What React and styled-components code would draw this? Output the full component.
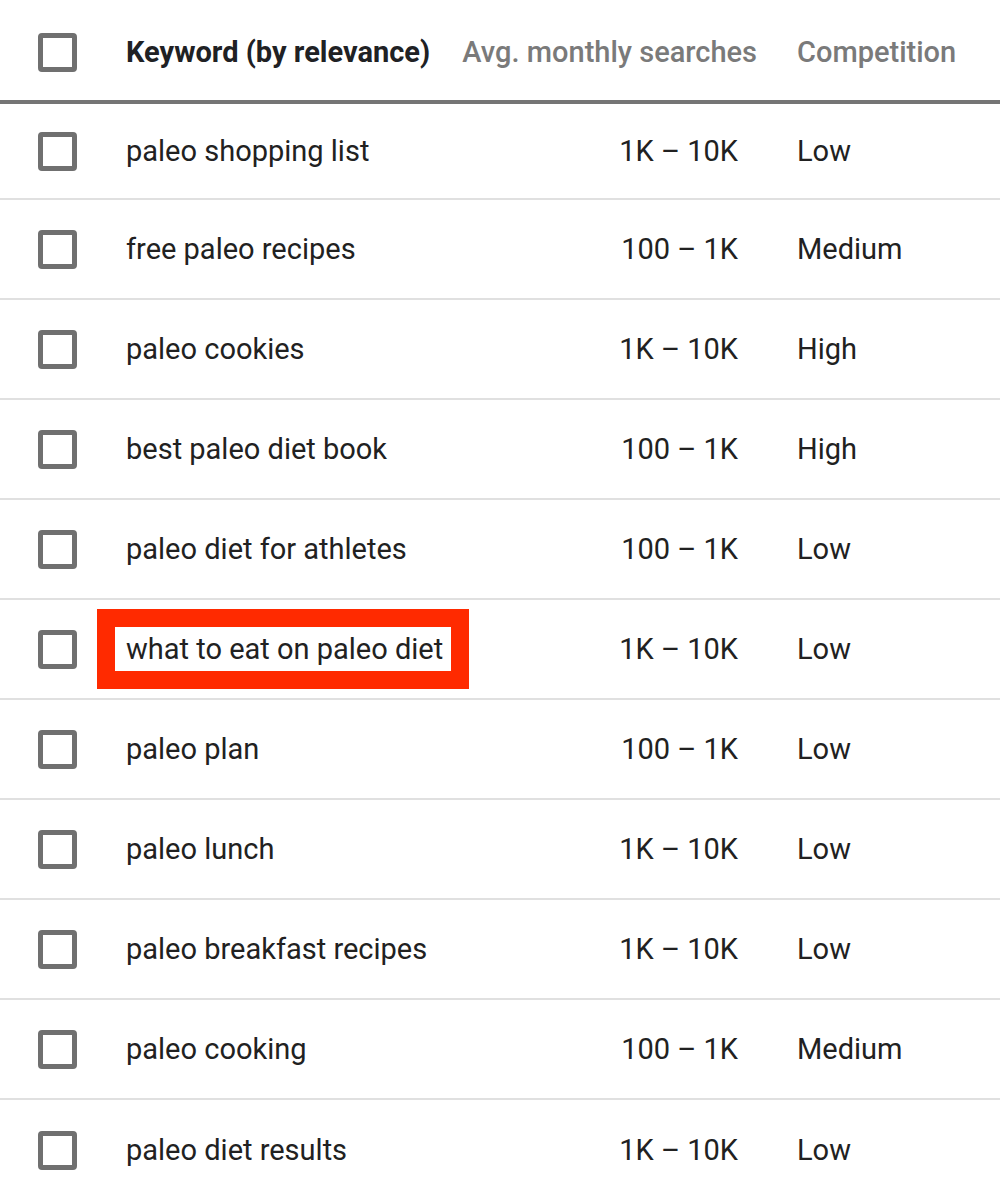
import React from 'react'
import styled, { createGlobalStyle, css } from 'styled-components'

const GlobalStyle = createGlobalStyle`
    body {
        margin: 0;
        background: #fff;
        font-family: Roboto, "Liberation Sans", sans-serif;
    }
`

const rows = [
    { keyword: 'paleo shopping list', searches: '1K – 10K', competition: 'Low' },
    { keyword: 'free paleo recipes', searches: '100 – 1K', competition: 'Medium' },
    { keyword: 'paleo cookies', searches: '1K – 10K', competition: 'High' },
    { keyword: 'best paleo diet book', searches: '100 – 1K', competition: 'High' },
    { keyword: 'paleo diet for athletes', searches: '100 – 1K', competition: 'Low' },
    { keyword: 'what to eat on paleo diet', searches: '1K – 10K', competition: 'Low', marked: true },
    { keyword: 'paleo plan', searches: '100 – 1K', competition: 'Low' },
    { keyword: 'paleo lunch', searches: '1K – 10K', competition: 'Low' },
    { keyword: 'paleo breakfast recipes', searches: '1K – 10K', competition: 'Low' },
    { keyword: 'paleo cooking', searches: '100 – 1K', competition: 'Medium' },
    { keyword: 'paleo diet results', searches: '1K – 10K', competition: 'Low' },
]

const Table = styled.div`
    width: 1000px;
    font-size: 29px;
    color: #212121;
`

const gridColumns = css`
    display: grid;
    grid-template-columns: 126px 324px 347px 1fr;
    align-items: center;
    box-sizing: border-box;
`

const HeaderRow = styled.header`
    ${gridColumns}
    height: 104px;
    padding-top: 4px;
    border-bottom: 4px solid #757575;
`

const Row = styled.div`
    ${gridColumns}
    height: 100px;
    border-bottom: 2px solid #e0e0e0;
    &:first-of-type {
        height: 96px;
    }
    &:last-of-type {
        border-bottom: none;
    }
`

const CheckCell = styled.div`
    padding-left: 38px;
    display: flex;
    align-items: center;
`

const Checkbox = styled.span`
    display: block;
    width: 39px;
    height: 39px;
    box-sizing: border-box;
    border: 5px solid #707070;
    border-radius: 4px;
`

const HeadLabel = styled.div`
    font-weight: ${p => (p.strong ? 700 : 500)};
    color: ${p => (p.strong ? '#202124' : '#7a7a7a')};
    text-align: ${p => p.align || 'left'};
    padding-right: ${p => p.pad || 0}px;
    white-space: nowrap;
`

const Cell = styled.div`
    text-align: ${p => p.align || 'left'};
    padding-right: ${p => p.pad || 0}px;
    white-space: nowrap;
`

const Highlight = styled.span`
    display: inline-block;
    line-height: 34px;
    padding: 5px 8px 5px 11px;
    margin: -5px -8px -5px -11px;
    outline: 18px solid #ff2a00;
`

const App = () => {
    return (
        <>
            <GlobalStyle />
            <Table>
                <HeaderRow>
                    <CheckCell><Checkbox /></CheckCell>
                    <HeadLabel strong>Keyword (by relevance)</HeadLabel>
                    <HeadLabel align='right' pad={40}>Avg. monthly searches</HeadLabel>
                    <HeadLabel>Competition</HeadLabel>
                </HeaderRow>
                <div>
                    {rows.map(row => (
                        <Row key={row.keyword}>
                            <CheckCell><Checkbox /></CheckCell>
                            <Cell>
                                {row.marked ? <Highlight>{row.keyword}</Highlight> : row.keyword}
                            </Cell>
                            <Cell align='right' pad={59}>{row.searches}</Cell>
                            <Cell>{row.competition}</Cell>
                        </Row>
                    ))}
                </div>
            </Table>
        </>
    )
}

export default App
